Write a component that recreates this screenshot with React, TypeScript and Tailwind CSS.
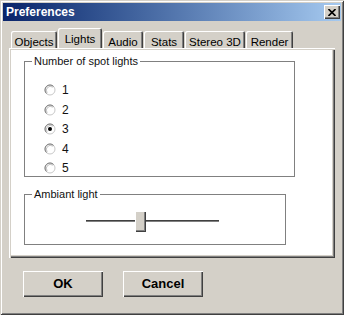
const font = "font-['Liberation_Sans',Arial,sans-serif]";

const Radio = ({ label, checked }: { label: string; checked?: boolean }) => (
  <div className="flex items-center h-[12px]">
    <svg width="12" height="12" viewBox="0 0 12 12" className="shrink-0">
      <circle cx="6" cy="6" r="5" fill="#fff" stroke="#c8c8c8" strokeWidth="1" />
      <path d="M2.46 9.54 A5 5 0 0 1 9.54 2.46" stroke="#7a7a7a" strokeWidth="1" fill="none" />
      <path d="M3.2 8.8 A4 4 0 0 1 8.8 3.2" stroke="#b0b0b0" strokeWidth="0.8" fill="none" />
      {checked && <circle cx="6" cy="6" r="2" fill="#000" />}
    </svg>
    <span className="ml-[6px] text-[12px] leading-none text-[#111]">{label}</span>
  </div>
);

const Tab = ({ label, w, active }: { label: string; w: number; active?: boolean }) => (
  <div
    className={
      active
        ? "h-[20px] bg-[#d4d0c8] rounded-t-[2px] shadow-[inset_1px_1px_0_#fff,inset_-1px_0_0_#404040,inset_-2px_0_0_#808080] flex items-start justify-center pt-[3px] text-[11.5px] z-10"
        : "h-[17px] bg-[#d4d0c8] rounded-t-[2px] shadow-[inset_1px_1px_0_#fff,inset_-1px_0_0_#404040,inset_-2px_0_0_#808080] flex items-start justify-center pt-[3px] text-[11.5px]"
    }
    style={{ width: w }}
  >
    {label}
  </div>
);

const Button = ({ label }: { label: string }) => (
  <div className="w-[80px] h-[26px] bg-[#d4d0c8] shadow-[inset_1px_1px_0_#fff,inset_-1px_-1px_0_#404040,inset_-2px_-2px_0_#808080] flex items-center justify-center font-bold text-[13px] text-black">
    {label}
  </div>
);

export default function App() {
  return (
    <div
      className={`${font} w-[344px] h-[315px] bg-[#d4d0c8] p-[3px] flex flex-col shadow-[inset_1px_1px_0_#d4d0c8,inset_-1px_-1px_0_#404040,inset_2px_2px_0_#fff,inset_-2px_-2px_0_#808080]`}
    >
      {/* title bar */}
      <div className="h-[18px] flex items-center justify-between bg-gradient-to-r from-[#0a246a] to-[#a6caf0] pl-[3px] pr-[1px]">
        <span className="text-white font-bold text-[12px] leading-none">Preferences</span>
        <div className="w-[16px] h-[14px] bg-[#d4d0c8] shadow-[inset_1px_1px_0_#fff,inset_-1px_-1px_0_#404040,inset_-2px_-2px_0_#808080] flex items-center justify-center">
          <svg width="8" height="7" viewBox="0 0 8 7">
            <path d="M0.5 0 L7.5 7 M7.5 0 L0.5 7" stroke="#000" strokeWidth="1.6" />
          </svg>
        </div>
      </div>

      {/* tabs */}
      <div className="mt-[7px] ml-[8px] h-[20px] flex items-end gap-[1px] text-black">
        <Tab label="Objects" w={46} />
        <Tab label="Lights" w={44} active />
        <Tab label="Audio" w={40} />
        <Tab label="Stats" w={40} />
        <Tab label="Stereo 3D" w={60} />
        <Tab label="Render" w={47} />
      </div>

      {/* panel */}
      <div className="ml-[6px] w-[326px] h-[210px] bg-white shadow-[inset_1px_1px_0_#fff,inset_2px_2px_0_#d4d0c8,inset_-1px_-1px_0_#404040,inset_-2px_-2px_0_#808080,inset_-3px_-3px_0_#d4d0c8] pt-[7px] pl-[15px] flex flex-col">
        <fieldset className="w-[271px] h-[122px] border border-[#808080] text-[11px]">
          <legend className="ml-[7px] px-[2px] leading-[13px] text-[#111]">Number of spot lights</legend>
          <div className="ml-[19px] mt-[16px] flex flex-col gap-[7.5px]">
            <Radio label="1" />
            <Radio label="2" />
            <Radio label="3" checked />
            <Radio label="4" />
            <Radio label="5" />
          </div>
        </fieldset>

        <fieldset className="mt-[11px] w-[262px] h-[57px] border border-[#808080] text-[11px]">
          <legend className="ml-[7px] px-[2px] leading-[13px] text-[#111]">Ambiant light</legend>
          <div className="ml-[61px] mt-[10px] w-[133px] h-[21px] flex items-center">
            <div className="w-[49px] h-[3px] bg-[#808080] border-b border-[#fff] shadow-[inset_0_1px_0_#404040]" />
            <div className="w-[11px] h-[21px] bg-[#d4d0c8] shadow-[inset_1px_1px_0_#fff,inset_-1px_-1px_0_#404040,inset_-2px_-2px_0_#808080]" />
            <div className="flex-1 h-[3px] bg-[#808080] border-b border-[#fff] shadow-[inset_0_1px_0_#404040]" />
          </div>
        </fieldset>
      </div>

      {/* buttons */}
      <div className="mt-[13px] ml-[20px] flex gap-[20px]">
        <Button label="OK" />
        <Button label="Cancel" />
      </div>
    </div>
  );
}
